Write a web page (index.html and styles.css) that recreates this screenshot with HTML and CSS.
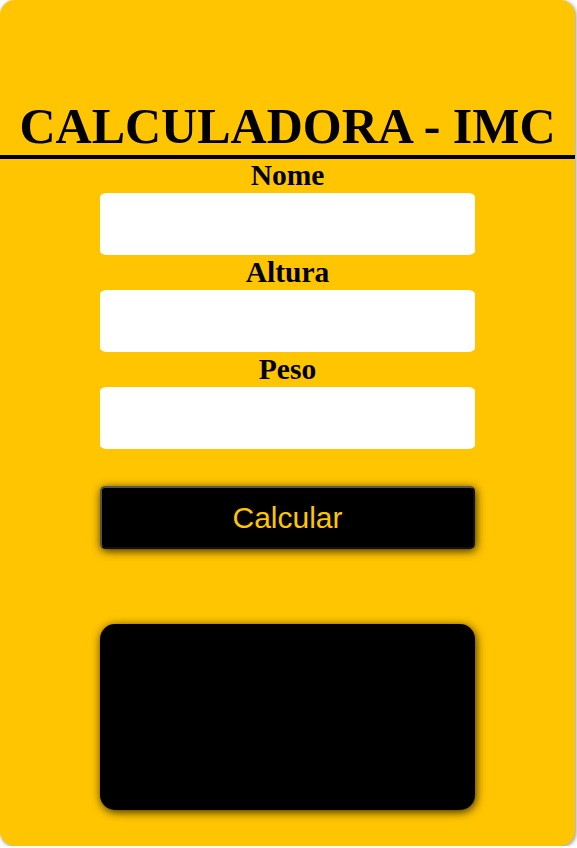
FILE: index.html
```html
<!DOCTYPE html>
<html lang="pt">
<head>
<meta charset="utf-8">
<title>Calculadora - IMC</title>
<link rel="stylesheet" href="styles.css">
</head>
<body>
<main class="card">
  <h1 class="title">CALCULADORA - IMC</h1>
  <form class="form">
    <label class="label" for="nome">Nome</label>
    <input class="field" id="nome" type="text">
    <label class="label" for="altura">Altura</label>
    <input class="field" id="altura" type="text">
    <label class="label" for="peso">Peso</label>
    <input class="field" id="peso" type="text">
    <button class="btn" type="button">Calcular</button>
    <div class="result"></div>
  </form>
</main>
</body>
</html>
```

FILE: styles.css
```css
html, body {
  margin: 0;
  padding: 0;
  background: #ffffff;
}

.card {
  box-sizing: border-box;
  width: 575px;
  height: 846px;
  background: #ffc500;
  border-radius: 15px;
  box-shadow: 1px 1px 4px rgba(0, 0, 0, 0.45);
  padding-top: 99px;
  overflow: hidden;
}

.title {
  margin: 0;
  font-family: "Liberation Serif", "Times New Roman", serif;
  font-weight: bold;
  font-size: 50px;
  line-height: 55px;
  text-align: center;
  color: #000;
  border-bottom: 4px solid #000;
  padding-bottom: 1px;
}

.form {
  display: flex;
  flex-direction: column;
  align-items: center;
}

.label {
  display: block;
  font-family: "Liberation Serif", "Times New Roman", serif;
  font-weight: bold;
  font-size: 29.5px;
  line-height: 32px;
  color: #000;
  margin-top: 1px;
}

.label:first-child {
  margin-top: 0;
}

.field {
  box-sizing: border-box;
  width: 375px;
  height: 62px;
  margin-top: 2px;
  border: none;
  border-radius: 7px / 4px;
  background: #fff;
  outline: none;
}

.btn {
  box-sizing: border-box;
  width: 375px;
  height: 63px;
  margin-top: 37px;
  background: #000;
  color: #ffc500;
  font-family: "Liberation Sans", Arial, sans-serif;
  font-size: 30px;
  border-style: solid;
  border-width: 2px;
  border-color: #555 #111 #111 #555;
  border-radius: 5px;
  box-shadow: 1px 2px 10px rgba(0, 0, 0, 0.8);
  cursor: pointer;
}

.result {
  box-sizing: border-box;
  width: 375px;
  height: 186px;
  margin-top: 75px;
  background: #000;
  border-radius: 15px;
  box-shadow: 1px 2px 10px rgba(0, 0, 0, 0.8);
}
```
